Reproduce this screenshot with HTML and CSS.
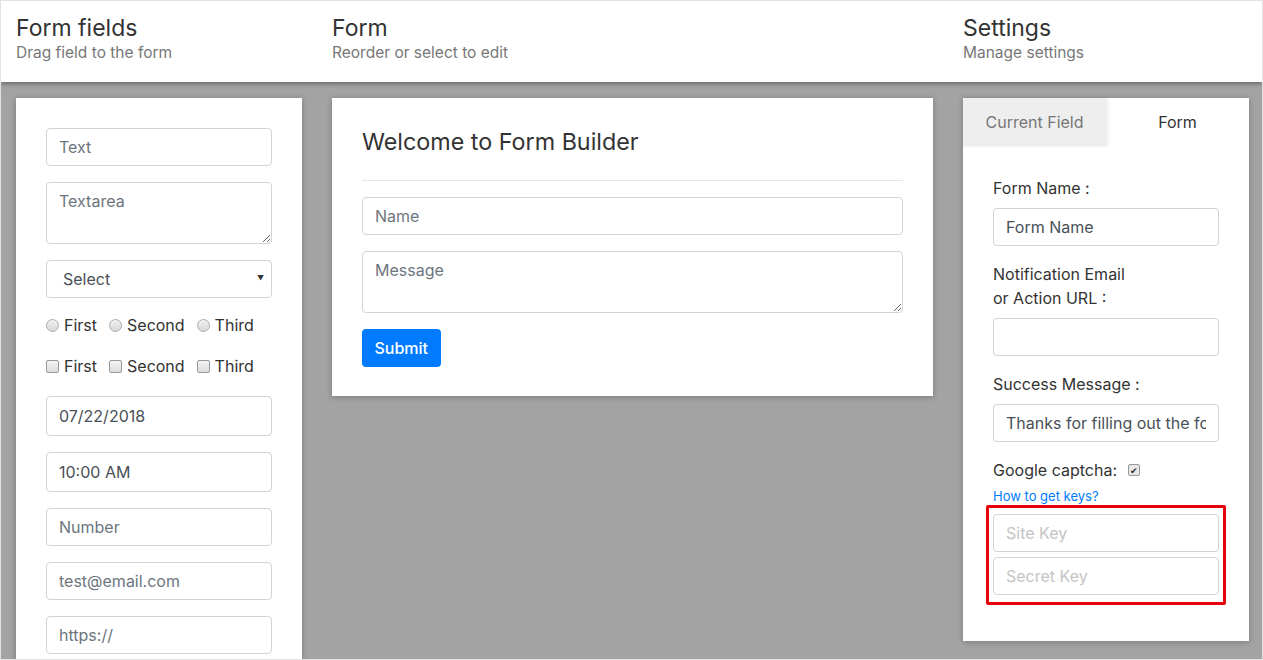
FILE: index.html
```html
<!DOCTYPE html>
<html>
<head>
<meta charset="utf-8">
<link rel="stylesheet" href="styles.css">
</head>
<body>
<div class="page">
  <header class="topbar">
    <div class="head-col">
      <div class="head-title">Form fields</div>
      <div class="head-sub">Drag field to the form</div>
    </div>
    <div class="head-col">
      <div class="head-title">Form</div>
      <div class="head-sub">Reorder or select to edit</div>
    </div>
    <div class="head-col">
      <div class="head-title">Settings</div>
      <div class="head-sub">Manage settings</div>
    </div>
  </header>
  <main class="workspace">
    <section class="panel fields">
      <input class="ctl" type="text" placeholder="Text">
      <textarea class="ctl area" placeholder="Textarea"></textarea>
      <div class="ctl select"><span>Select</span><span class="arrow">▼</span></div>
      <div class="choice-row">
        <label class="choice"><span class="radio"></span>First</label>
        <label class="choice"><span class="radio"></span>Second</label>
        <label class="choice"><span class="radio"></span>Third</label>
      </div>
      <div class="choice-row">
        <label class="choice"><span class="box"></span>First</label>
        <label class="choice"><span class="box"></span>Second</label>
        <label class="choice"><span class="box"></span>Third</label>
      </div>
      <input class="ctl tall" type="text" value="07/22/2018">
      <input class="ctl tall" type="text" value="10:00 AM">
      <input class="ctl" type="text" placeholder="Number">
      <input class="ctl" type="text" placeholder="test@email.com">
      <input class="ctl" type="text" placeholder="https://">
    </section>
    <section class="panel builder">
      <h2 class="builder-title">Welcome to Form Builder</h2>
      <hr class="rule">
      <input class="ctl" type="text" placeholder="Name">
      <textarea class="ctl area" placeholder="Message"></textarea>
      <button class="submit">Submit</button>
    </section>
    <section class="panel settings">
      <div class="tabs">
        <div class="tab inactive">Current Field</div>
        <div class="tab active">Form</div>
      </div>
      <div class="settings-body">
        <label class="lbl">Form Name :</label>
        <input class="ctl" type="text" value="Form Name">
        <label class="lbl">Notification Email<br>or Action URL :</label>
        <input class="ctl" type="text">
        <label class="lbl">Success Message :</label>
        <input class="ctl" type="text" value="Thanks for filling out the form!">
        <div class="captcha-row">Google captcha: <span class="check">✔</span></div>
        <a class="keys-link" href="#">How to get keys?</a>
        <div class="highlight">
          <input class="ctl key" type="text" placeholder="Site Key">
          <input class="ctl key" type="text" placeholder="Secret Key">
        </div>
      </div>
    </section>
  </main>
</div>
</body>
</html>
```

FILE: styles.css
```css
* { box-sizing: border-box; }
html, body { margin: 0; padding: 0; }
body {
  font-family: Inter, Roboto, "Liberation Sans", sans-serif;
  color: #333;
  width: 1263px;
  height: 660px;
  overflow: hidden;
}
.page {
  width: 1263px;
  height: 660px;
  border: 1px solid #e2e2e2;
  background: #a3a3a3;
  overflow: hidden;
  display: flex;
  flex-direction: column;
}
.topbar {
  background: #fff;
  height: 81px;
  flex: none;
  display: grid;
  grid-template-columns: 286px 601px 286px;
  column-gap: 30px;
  padding: 13px 0 0 15px;
  box-shadow: 0 2px 4px rgba(0,0,0,0.35);
  position: relative;
  z-index: 1;
}
.head-title {
  font-size: 23px;
  line-height: 28px;
  color: #333;
}
.head-sub {
  font-size: 15.5px;
  line-height: 22px;
  color: #777;
}
.workspace {
  display: grid;
  grid-template-columns: 286px 601px 286px;
  column-gap: 30px;
  align-items: start;
  padding: 16px 0 0 15px;
}
.panel {
  background: #fff;
  box-shadow: 0 1px 6px rgba(0,0,0,0.25);
}
.fields { padding: 30px 30px; }
.ctl {
  display: block;
  width: 100%;
  height: 38px;
  margin: 0 0 16px;
  padding: 6px 12px;
  border: 1px solid #ced4da;
  border-radius: 4px;
  font-family: inherit;
  font-size: 16px;
  line-height: 24px;
  color: #495057;
  background: #fff;
  outline: none;
}
.ctl::placeholder { color: #6c757d; }
.ctl.tall { height: 40px; }
.ctl.area { height: 62px; resize: vertical; }
.select {
  display: flex;
  align-items: center;
  justify-content: space-between;
  padding: 0 7px 0 16px;
  color: #495057;
}
.arrow { font-size: 7px; color: #333; }
.choice-row {
  display: flex;
  height: 22px;
  align-items: center;
  margin-bottom: 19px;
  gap: 12px;
  font-size: 16px;
  color: #333;
}
.choice { display: flex; align-items: center; gap: 5px; }
.radio {
  width: 13px; height: 13px;
  border: 1px solid #aaa;
  border-radius: 50%;
  background: linear-gradient(#f2f2f2, #d8d8d8);
}
.box {
  width: 13px; height: 13px;
  border: 1px solid #999;
  border-radius: 2px;
  background: linear-gradient(#f4f4f4, #dcdcdc);
}
.builder { padding: 30px 30px 29px; }
.builder-title {
  margin: 0;
  font-size: 23.3px;
  font-weight: 400;
  line-height: 28px;
  color: #333;
}
.rule {
  border: 0;
  border-top: 1px solid #e5e5e5;
  margin: 24px 0 16px;
}
.submit {
  display: block;
  height: 38px;
  padding: 0 12.5px;
  border: 0;
  border-radius: 4px;
  background: #007bff;
  color: #fff;
  font-family: inherit;
  font-size: 16px;
  font-weight: 500;
}
.settings { padding-bottom: 36px; }
.tabs { display: flex; height: 48px; }
.tab {
  display: flex;
  align-items: center;
  justify-content: center;
  font-size: 16px;
}
.tab.inactive {
  width: 143px;
  background: #eee;
  color: #777;
  box-shadow: 2px 0 3px rgba(0,0,0,0.08);
}
.tab.active { flex: 1; color: #333; }
.settings-body { padding: 30px 30px 0; }
.lbl {
  display: block;
  font-size: 16px;
  line-height: 24px;
  margin-bottom: 8px;
  color: #333;
}
.captcha-row {
  display: flex;
  align-items: center;
  height: 24px;
  font-size: 16px;
  color: #333;
}
.check {
  display: inline-flex;
  align-items: center;
  justify-content: center;
  width: 12px; height: 12px;
  margin-left: 11px;
  border: 1px solid #999;
  border-radius: 2px;
  background: #e8e8e8;
  font-size: 9px;
  color: #333;
  line-height: 1;
}
.keys-link {
  display: block;
  margin-top: 6px;
  font-size: 13px;
  line-height: 17px;
  color: #007bff;
  text-decoration: none;
}
.highlight {
  margin: 0 -7px;
  padding: 6px 4px 7px;
  border: 3px solid #e8000b;
  border-radius: 2px;
}
.ctl.key { margin-bottom: 5px; }
.ctl.key:last-child { margin-bottom: 0; }
.ctl.key::placeholder { color: #c4c4c4; }
```
